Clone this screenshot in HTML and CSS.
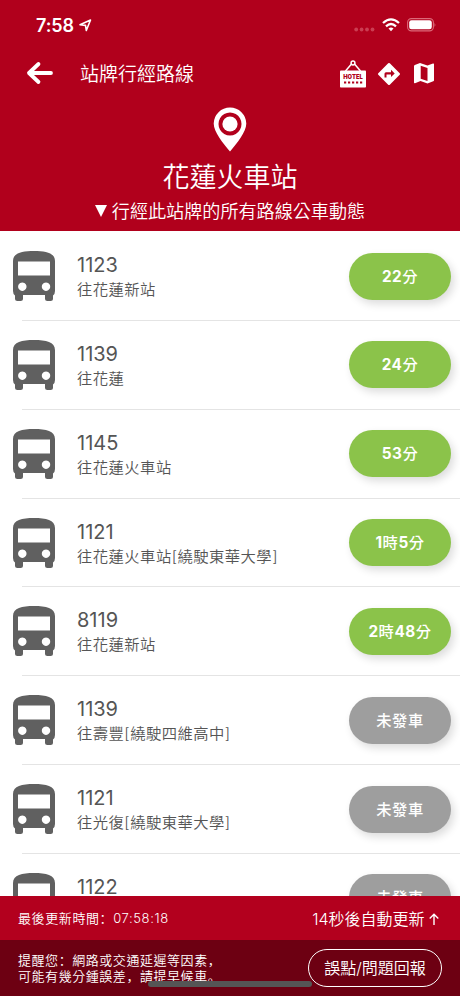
FILE: index.html
```html
<!DOCTYPE html>
<html lang="zh-Hant">
<head>
<meta charset="utf-8">
<title>站牌行經路線</title>
<link rel="stylesheet" href="styles.css">
</head>
<body>
<svg class="defs" width="0" height="0">
  <symbol id="bus" viewBox="0 0 42 50">
    <path fill="currentColor" fill-rule="evenodd" d="M21 0C33 0 42 2 42 10V40q0 3-2 4.500V47.500Q40 50 37.500 50H34.500Q32 50 32 47.500V44H10V47.500Q10 50 7.500 50H4.500Q2 50 2 47.500V44.500Q0 43 0 40V10C0 2 9 0 21 0ZM5 10.500V24.500H37V10.500ZM9.300 31.500a4.200 4.200 0 1 0 .01 0ZM33 31.500a4.200 4.200 0 1 0 .01 0Z"/>
  </symbol>
</svg>
<div class="app">
  <header class="header">
    <div class="status">
      <span class="clock">7:58</span>
      <svg class="locate" width="13" height="13" viewBox="0 0 13 13"><path d="M1 5.800 11.500 1 7.300 11.500 6.500 6.400Z" fill="none" stroke="#fff" stroke-width="1.600" stroke-linejoin="round"/></svg>
      <svg class="signal" width="21" height="5" viewBox="0 0 21 5" fill="#cb3d52"><circle cx="2.200" cy="2.500" r="1.900"/><circle cx="7.600" cy="2.500" r="1.900"/><circle cx="13" cy="2.500" r="1.900"/><circle cx="18.500" cy="2.500" r="1.900"/></svg>
      <svg class="wifi" width="18" height="14" viewBox="0 0 18 14" fill="none" stroke="#fff" stroke-width="2.300"><path d="M1 5Q9-2.300 17 5"/><path d="M4 8.300Q9 3.700 14 8.300"/><path d="M6.500 10.500Q9 8.300 11.500 10.500L9 13.200Z" fill="#fff" stroke="none"/></svg>
      <svg class="battery" width="30" height="14" viewBox="0 0 30 14"><rect x=".6" y=".6" width="25.800" height="12.300" rx="3.800" fill="none" stroke="#dc6878" stroke-width="1.100"/><rect x="2.200" y="2.200" width="22.600" height="9.100" rx="2.300" fill="#fff"/><path d="M27.500 4.700q1.800 2 0 4.200Z" fill="#dc6878"/></svg>
    </div>
    <div class="toolbar">
      <svg class="back" width="28" height="24" viewBox="0 0 28 24" fill="none" stroke="#fff" stroke-width="3.800" stroke-linecap="round" stroke-linejoin="round"><path d="M25 12H3M12.500 3 3 12l9.500 9"/></svg>
      <h1 class="title">站牌行經路線</h1>
      <svg class="hotel" width="26" height="28" viewBox="0 0 26 28"><path d="M5.500 11 11.500 4M20.500 11 14.500 4" stroke="#fff" stroke-width="1.500"/><circle cx="13" cy="3" r="1.900" fill="none" stroke="#fff" stroke-width="1.500"/><rect y="10.500" width="26" height="17" rx=".8" fill="#fff"/><text x="13" y="18.800" text-anchor="middle" textLength="19.500" lengthAdjust="spacingAndGlyphs" class="hotel-text">HOTEL</text><path d="M4 22.500H22.500" stroke="#b1001c" stroke-width="2" stroke-dasharray="2.200 1.800"/></svg>
      <svg class="direction" width="24" height="24" viewBox="0 0 24 24"><path fill="#fff" fill-rule="evenodd" d="M11.200 1.300q.8-.8 1.600 0l9.900 9.900q.8.800 0 1.600l-9.900 9.900q-.8.800-1.600 0l-9.900-9.900q-.8-.8 0-1.600ZM14 7.700v2.500H9q-1.500 0-1.500 1.500V15.500H9.500V12.500h4.500v2.600L17.700 11.500Z"/></svg>
      <svg class="map" width="20" height="21" viewBox="0 0 20 21"><path fill="#fff" fill-rule="evenodd" d="M0 3.200Q0 2.300.8 2L6 0l7.500 2.400L19 .5q1-.3 1 .7v16q0 .8-.8 1.100L13.500 20.500 6.500 18 1 20.300q-1 .3-1-.7ZM6.700 2.800V15.700l6.800 2.300V5Z"/></svg>
    </div>
    <svg class="pin" width="34" height="45" viewBox="0 0 34 45"><path fill="#fff" fill-rule="evenodd" d="M17 .5A16.300 16.300 0 0 1 33.300 16.500C33.300 25 24 36 17 44.500 10 36 .7 25 .7 16.500A16.300 16.300 0 0 1 17 .5ZM17 5.500a11.500 11.500 0 1 0 .01 0Z"/><circle cx="17" cy="17" r="7.600" fill="#fff"/></svg>
    <h2 class="stop">花蓮火車站</h2>
    <p class="caption"><svg width="12" height="12" viewBox="0 0 12 12"><path d="M0 0H12L6 12Z" fill="#fff"/></svg>行經此站牌的所有路線公車動態</p>
  </header>

  <main class="routes">
    <section class="route"><svg class="bus"><use href="#bus"/></svg><div class="info"><b>1123</b><span>往花蓮新站</span></div><div class="eta">22<em>分</em></div></section>
    <section class="route"><svg class="bus"><use href="#bus"/></svg><div class="info"><b>1139</b><span>往花蓮</span></div><div class="eta">24<em>分</em></div></section>
    <section class="route"><svg class="bus"><use href="#bus"/></svg><div class="info"><b>1145</b><span>往花蓮火車站</span></div><div class="eta">53<em>分</em></div></section>
    <section class="route"><svg class="bus"><use href="#bus"/></svg><div class="info"><b>1121</b><span>往花蓮火車站[繞駛東華大學]</span></div><div class="eta">1<em>時</em>5<em>分</em></div></section>
    <section class="route"><svg class="bus"><use href="#bus"/></svg><div class="info"><b>8119</b><span>往花蓮新站</span></div><div class="eta">2<em>時</em>48<em>分</em></div></section>
    <section class="route"><svg class="bus"><use href="#bus"/></svg><div class="info"><b>1139</b><span>往壽豐[繞駛四維高中]</span></div><div class="eta idle"><em>未發車</em></div></section>
    <section class="route"><svg class="bus"><use href="#bus"/></svg><div class="info"><b>1121</b><span>往光復[繞駛東華大學]</span></div><div class="eta idle"><em>未發車</em></div></section>
    <section class="route"><svg class="bus"><use href="#bus"/></svg><div class="info"><b>1122</b></div><div class="eta idle"><em>未發車</em></div></section>
  </main>

  <div class="refresh"><span class="updated">最後更新時間<i lang="zh-Hans">：</i>07:58:18</span><span class="countdown">14秒後自動更新 <svg width="10" height="12" viewBox="0 0 10 12" fill="none" stroke="#fff" stroke-width="1.400"><path d="M5 12V1.200M.7 5.500 5 1.200 9.300 5.500"/></svg></span></div>
  <footer class="notice">
    <p>提醒您<i lang="zh-Hans">：</i>網路或交通延遲等因素<i lang="zh-Hans">，</i><br>可能有幾分鍾誤差<i lang="zh-Hans">，</i>請提早候車<i lang="zh-Hans">。</i></p>
    <div class="home-indicator"></div>
    <div class="report">誤點/問題回報</div>
  </footer>
</div>
</body>
</html>
```
FILE: styles.css
```css
* { box-sizing: border-box; }
body { margin: 0; background: #fff; font-family: Inter, "Noto Sans CJK TC", sans-serif; }
h1, h2, p { margin: 0; font-weight: 350; }
i { font-family: "Noto Sans CJK SC", sans-serif; font-style: normal; }
svg { flex: none; }
.defs { position: absolute; }
.app { width: 460px; height: 996px; display: flex; flex-direction: column; overflow: hidden; }

.header { height: 231px; flex: none; background: #b1001c; color: #fff; display: flex; flex-direction: column; align-items: center; }
.status { width: 100%; height: 50px; padding: 0 23px 0 36px; display: flex; align-items: center; }
.clock { font-size: 18px; line-height: 20px; font-weight: 600; width: 39px; letter-spacing: -.1px; margin-top: 2px; }
.locate { margin-left: 4px; }
.signal { margin: 9px 7px 0 auto; }
.wifi { margin-right: 7px; }
.battery { width: 30px; }
.toolbar { width: 100%; height: 56px; padding: 0 26px 8px 26px; display: flex; align-items: center; }
.title { margin: 2px auto 0 26px; font-size: 19px; line-height: 28px; }
.back { margin-top: -3px; }
.hotel { margin-right: 11px; }
.hotel-text { font: 900 6.400px Inter, sans-serif; fill: #b1001c; }
.direction { margin: -1px 13px 0 0; }
.map { margin-top: -1px; }
.pin { margin-top: 1px; }
.stop { margin-top: 7px; font-size: 27px; line-height: 38px; }
.caption { display: flex; align-items: center; gap: 5px; font-size: 18.100px; line-height: 28px; }

.routes { height: 665px; flex: none; overflow: hidden; padding-top: 1px; }
.route { height: 88.850px; display: flex; align-items: flex-start; padding: 19px 9px 0 13px; background: linear-gradient(#e4e4e4, #e4e4e4) 22px 100% / 438px 1px no-repeat; }
.bus { width: 42px; height: 50px; color: #606060; }
.info { margin: 1px auto 0 22px; display: flex; flex-direction: column; color: #555; }
.info b { font-size: 20px; line-height: 26px; font-weight: 400; }
.info span { margin-top: 1px; font-size: 15.300px; line-height: 22px; letter-spacing: .48px; font-weight: 350; }
.eta { width: 102px; height: 47px; margin-top: 1.500px; border-radius: 24px; background: #8bc34a; color: #fff; font-size: 15.300px; line-height: 47px; letter-spacing: .5px; font-weight: 700; text-align: center; box-shadow: 3px 4px 8px rgba(0, 0, 0, .14); }
.eta em { font-style: normal; font-weight: 500; }
.idle { background: #9e9e9e; }

.refresh { height: 44px; flex: none; padding: 0 21px 0 18px; background: #b3001e; color: #fff; display: flex; align-items: center; justify-content: space-between; font-weight: 350; }
.updated { font-size: 13px; letter-spacing: .6px; margin-top: -1px; }
.countdown { font-size: 16px; margin-top: -1px; }
.notice { position: relative; height: 56px; flex: none; padding: 0 18px; background: #6d0012; color: #fff; display: flex; align-items: center; justify-content: space-between; }
.notice p { font-size: 13px; line-height: 15.500px; letter-spacing: .55px; white-space: nowrap; }
.home-indicator { position: absolute; left: 148px; top: 41px; width: 164px; height: 6px; border-radius: 3px; background: #555; }
.report { position: relative; width: 134px; height: 38px; border: 1px solid #fff; border-radius: 19px; background: #6d0012; font-size: 16px; line-height: 36px; font-weight: 350; text-align: center; }
```
